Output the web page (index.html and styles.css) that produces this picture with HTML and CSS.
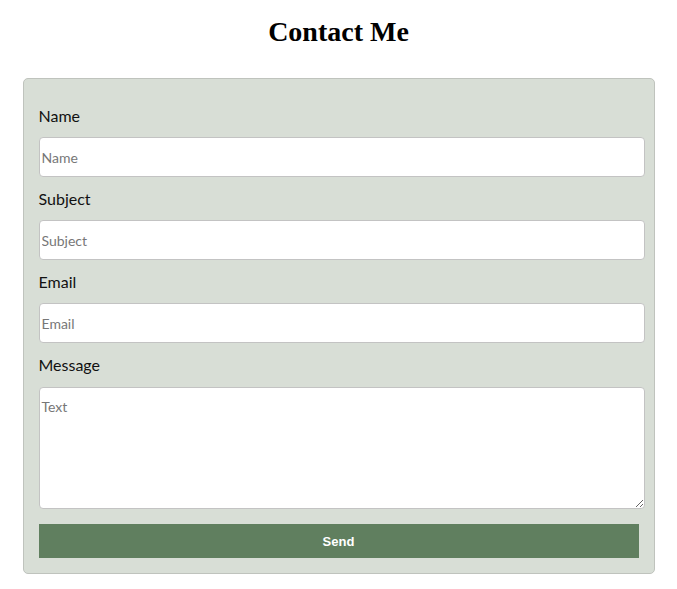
FILE: index.html
```html
<!DOCTYPE html>
<html lang="en">
<head>
<meta charset="utf-8">
<title>Contact Me</title>
<link rel="stylesheet" href="styles.css">
</head>
<body>
<h1 class="title">Contact Me</h1>
<form class="card">
  <label class="label" for="name">Name</label>
  <input class="field" id="name" type="text" placeholder="Name">
  <label class="label" for="subject">Subject</label>
  <input class="field" id="subject" type="text" placeholder="Subject">
  <label class="label" for="email">Email</label>
  <input class="field" id="email" type="email" placeholder="Email">
  <label class="label label-msg" for="msg">Message</label>
  <textarea class="field area" id="msg" placeholder="Text"></textarea>
  <button class="send" type="button">Send</button>
</form>
</body>
</html>
```
FILE: styles.css
```css
html, body {
  margin: 0;
  padding: 0;
  background: #ffffff;
}
body {
  font-family: Lato, "Noto Sans", sans-serif;
  color: #111;
}
.title {
  margin: 0;
  padding-top: 15px;
  height: 78px;
  box-sizing: border-box;
  text-align: center;
  font-family: "Liberation Serif", serif;
  font-weight: bold;
  font-size: 28px;
  line-height: 34px;
  color: #000;
}
.card {
  width: 632px;
  box-sizing: border-box;
  margin: 0 auto;
  background: #d8ded6;
  border: 1px solid #bfc3bd;
  border-radius: 5px;
  padding: 15px;
  display: flex;
  flex-direction: column;
  align-items: flex-start;
}
.label {
  display: block;
  font-size: 16px;
  line-height: 20px;
  margin: 12px 0 11px;
}
.label-msg {
  margin-bottom: 12px;
}
.field {
  width: 606px;
  box-sizing: border-box;
  height: 40px;
  margin: 0;
  padding: 2px;
  border: 1px solid #c3c3c3;
  border-radius: 4px;
  background: #fff;
  font-family: Lato, "Noto Sans", sans-serif;
  font-size: 14px;
  color: #222;
  outline: none;
}
.field::placeholder {
  color: #777;
}
.area {
  height: 122px;
  padding: 10px 2px 2px;
  resize: vertical;
  display: block;
}
.send {
  margin-top: 15px;
  width: 600px;
  height: 34px;
  border: none;
  background: #607f5f;
  color: #fff;
  font-family: "Liberation Sans", Arial, sans-serif;
  font-weight: bold;
  font-size: 13px;
  cursor: pointer;
}
```
